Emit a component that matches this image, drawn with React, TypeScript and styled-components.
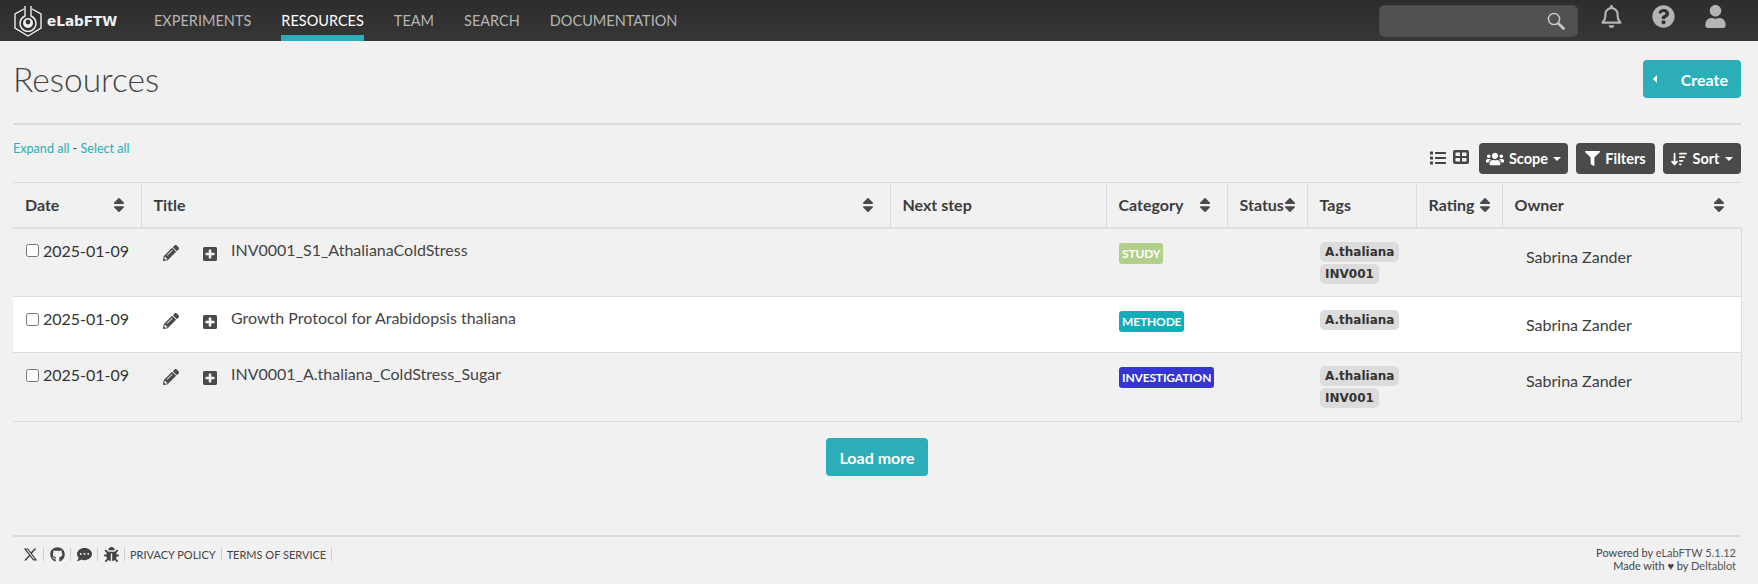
import styled, { createGlobalStyle } from "styled-components";
import { FaBug, FaCommentDots, FaFilter, FaGithub, FaList, FaPencilAlt, FaPlusSquare, FaQuestionCircle, FaSort, FaUser, FaUsers } from "react-icons/fa";
import { FaArrowDownWideShort, FaRegBell, FaXTwitter } from "react-icons/fa6";

const GlobalStyle = createGlobalStyle`
  html, body {
    margin: 0;
    padding: 0;
    background: #f1f1f1;
    color: #444;
    font-family: Lato, "Open Sans", sans-serif;
    font-size: 16px;
  }
`;

const NavBar = styled.nav`
  height: 41px;
  display: flex;
  align-items: stretch;
  padding: 0 31px 0 13px;
  background: linear-gradient(#2d2d2d, #363636);
`;
const Brand = styled.div`
  display: flex;
  align-items: center;
  gap: 4px;
  width: 126px;
  flex: none;
  color: #f0f0f0;
  font-family: "DejaVu Sans", sans-serif;
  font-weight: 700;
  font-size: 13.6px;
`;
const NavLinks = styled.div`
  display: flex;
`;
const NavLink = styled.a<{ $active?: boolean }>`
  display: flex;
  align-items: center;
  margin: 0 15px;
  font-size: 14.5px;
  color: ${(p) => (p.$active ? "#fff" : "#b5b5b5")};
  box-shadow: ${(p) => (p.$active ? "inset 0 -6px #2baeb9" : "none")};
`;
const NavRight = styled.div`
  margin-left: auto;
  display: flex;
  align-items: center;
  color: #b4b4b4;
`;
const SearchBox = styled.div`
  width: 199px;
  height: 32px;
  box-sizing: border-box;
  margin-right: 22px;
  padding-right: 12px;
  display: flex;
  align-items: center;
  justify-content: flex-end;
  background: #515151;
  border: 1px solid #494949;
  border-radius: 5px;
`;
const NavIcons = styled.div`
  display: flex;
  align-items: center;
  gap: 29px;
  font-size: 23px;
  padding-bottom: 9px;
  svg {
    display: block;
  }
`;

const Main = styled.main`
  padding: 0 17px 0 13px;
`;
const PageHead = styled.div`
  height: 84px;
  box-sizing: border-box;
  border-bottom: 2px solid #dcdcdc;
  display: flex;
  align-items: center;
  justify-content: space-between;
  padding-bottom: 6px;
`;
const Title = styled.h1`
  margin: 0;
  font-size: 33.5px;
  font-weight: 300;
  color: #444;
`;
const CreateButton = styled.button`
  width: 98px;
  height: 38px;
  border: 0;
  border-radius: 4px;
  background: #2baeb9;
  color: #fff;
  font: 700 16px Lato, sans-serif;
  display: flex;
  align-items: center;
  justify-content: space-between;
  padding: 0 13px 0 10px;
  &::before {
    content: "";
    border-right: 4px solid #fff;
    border-top: 4px solid transparent;
    border-bottom: 4px solid transparent;
  }
`;
const Toolbar = styled.div`
  height: 57px;
  display: flex;
  justify-content: space-between;
`;
const BulkLinks = styled.div`
  padding-top: 15px;
  font-size: 12.6px;
  line-height: 18px;
  a {
    color: #2baeb9;
  }
`;
const ToolActions = styled.div`
  display: flex;
  align-items: flex-start;
  padding-top: 18px;
`;
const ViewIcons = styled.div`
  display: flex;
  gap: 7px;
  margin: 7px 2px 0 0;
  font-size: 16px;
  color: #444;
`;
const ToolButton = styled.button<{ $width: number; $iconSize: number }>`
  width: ${(p) => p.$width}px;
  height: 31px;
  box-sizing: border-box;
  margin-left: 8px;
  padding: 0;
  display: flex;
  align-items: center;
  justify-content: center;
  gap: 5px;
  border: 0;
  border-radius: 4px;
  background: #4a4a4a;
  color: #fff;
  font: 700 14.5px Lato, sans-serif;
  svg {
    font-size: ${(p) => p.$iconSize}px;
  }
`;
const Caret = styled.span`
  border-top: 4px solid #fff;
  border-left: 4px solid transparent;
  border-right: 4px solid transparent;
`;

const Table = styled.table`
  width: 1728px;
  table-layout: fixed;
  border-collapse: collapse;
  border-top: 1px solid #dcdcdc;
  border-bottom: 1px solid #dcdcdc;
`;
const HeadCell = styled.th`
  height: 45px;
  padding: 0 13px 0 12px;
  box-sizing: border-box;
  text-align: left;
  font-size: 16px;
  font-weight: 700;
  color: #3c3c3c;
  border-bottom: 2px solid #dee2e6;
  & + & {
    border-left: 1px solid #dcdcdc;
  }
`;
const HeadInner = styled.div<{ $tight?: boolean }>`
  display: flex;
  align-items: center;
  justify-content: space-between;
  margin-right: ${(p) => (p.$tight ? "-5px" : "0")};
  svg {
    color: #4a4a4a;
    font-size: 18px;
    flex: none;
    margin-left: -4px;
  }
`;
const Row = styled.tr<{ $white?: boolean; $height: number }>`
  height: ${(p) => p.$height}px;
  background: ${(p) => (p.$white ? "#fff" : "transparent")};
  border-top: 1px solid #dcdcdc;
  &:first-child {
    border-top: 0;
  }
`;
const Cell = styled.td`
  vertical-align: top;
  padding: 13px 13px 0;
  box-sizing: border-box;
  font-size: 16px;
  line-height: 20px;
  color: #3c3c3c;
`;
const OwnerCell = styled(Cell)`
  padding: 18px 0 0 24px;
  border-right: 1px solid #dcdcdc;
`;
const DateWrap = styled.label`
  display: flex;
  align-items: center;
  gap: 4px;
  margin-top: -1px;
  white-space: nowrap;
  color: #333;
  font-size: 16px;
  input {
    margin: 0;
    width: 13px;
    height: 13px;
  }
`;
const TitleWrap = styled.div`
  display: flex;
  align-items: flex-start;
  margin: -2px 0 0 9px;
  font-size: 16px;
  color: #444;
`;
const EditIcon = styled.span`
  font-size: 16px;
  color: #4a4a4a;
  margin: 5px 23px 0 0;
  line-height: 0;
`;
const ExpandIcon = styled.span`
  font-size: 16px;
  color: #4a4a4a;
  margin: 6px 13px 0 0;
  line-height: 0;
`;
const CategoryBadge = styled.span<{ $color: string }>`
  display: block;
  width: fit-content;
  height: 21px;
  margin-top: 1px;
  padding: 0 3px;
  border-radius: 3px;
  background: ${(p) => p.$color};
  color: #fff;
  font-size: 12px;
  font-weight: 700;
  letter-spacing: -0.15px;
  line-height: 21px;
  text-transform: uppercase;
`;
const TagList = styled.div`
  display: flex;
  flex-direction: column;
  align-items: flex-start;
  gap: 2px;
`;
const Tag = styled.span`
  height: 20px;
  padding: 0 5px;
  border-radius: 5px;
  background: #dcdcdc;
  color: #333;
  font-family: "DejaVu Sans", sans-serif;
  font-size: 12px;
  font-weight: 700;
  line-height: 20px;
`;
const LoadRow = styled.div`
  display: flex;
  justify-content: center;
  margin-top: 16px;
`;
const LoadMore = styled.button`
  width: 102px;
  height: 38px;
  border: 0;
  border-radius: 4px;
  background: #2baeb9;
  color: #fff;
  font: 700 16px Lato, sans-serif;
`;
const Footer = styled.footer`
  margin-top: 59px;
  border-top: 2px solid #dcdcdc;
  padding-top: 9px;
  display: flex;
  justify-content: space-between;
  font-size: 11px;
  color: #444;
`;
const FooterLinks = styled.div`
  display: flex;
  align-items: center;
  height: 16px;
  padding-left: 4px;
`;
const FooterLink = styled.a<{ $icon?: boolean }>`
  display: flex;
  align-items: center;
  height: 13px;
  padding: 0 ${(p) => (p.$icon ? "5.5px" : "5px")};
  border-right: 1px solid #ccc;
  font-size: 15px;
  svg {
    display: block;
  }
`;
const FooterText = styled.span`
  font-size: 11px;
`;
const Powered = styled.div`
  padding-right: 5px;
  text-align: right;
  line-height: 13px;
  a {
    color: #555;
  }
`;

const Logo = () => (
  <svg width="30" height="32" viewBox="0 0 30 32" fill="none" stroke="#eee" strokeWidth="1.4">
    <path d="M11 4 L2 9 V23 L15 31 L28 23 V9 L19 4" />
    <path d="M12 1 V11 A8 8 0 1 0 18 11 V1" />
    <circle cx="15" cy="18" r="5" fill="#eee" stroke="none" />
    <circle cx="15" cy="17" r="2.4" fill="#333" stroke="none" />
  </svg>
);

const SearchIcon = () => (
  <svg width="18" height="18" viewBox="0 0 18 18" fill="none" stroke="#c8c8c8">
    <circle cx="7" cy="7" r="5.6" strokeWidth="1.5" />
    <path d="M11.5 11.5 L16.5 16.5" strokeWidth="2.8" strokeLinecap="round" />
  </svg>
);

const TableIcon = () => (
  <svg width="16" height="14" viewBox="0 0 16 14">
    <rect width="16" height="14" rx="2" fill="#444" />
    <rect x="2.5" y="2.5" width="4.5" height="3.5" fill="#f1f1f1" />
    <rect x="9" y="2.5" width="4.5" height="3.5" fill="#f1f1f1" />
    <rect x="2.5" y="8" width="4.5" height="3.5" fill="#f1f1f1" />
    <rect x="9" y="8" width="4.5" height="3.5" fill="#f1f1f1" />
  </svg>
);

const rows = [
  { title: "INV0001_S1_AthalianaColdStress", category: "Study", color: "#b2cf8c", tags: ["A.thaliana", "INV001"], height: 69 },
  { title: "Growth Protocol for Arabidopsis thaliana", category: "Methode", color: "#15acb9", tags: ["A.thaliana"], height: 56, white: true },
  { title: "INV0001_A.thaliana_ColdStress_Sugar", category: "Investigation", color: "#3535cf", tags: ["A.thaliana", "INV001"], height: 69 },
];

const widths = [128, 749, 216, 121, 80, 109, 86, 239];

export default function App() {
  return (
    <>
      <GlobalStyle />
      <NavBar>
        <Brand>
          <Logo />
          eLabFTW
        </Brand>
        <NavLinks>
          <NavLink>EXPERIMENTS</NavLink>
          <NavLink $active>RESOURCES</NavLink>
          <NavLink>TEAM</NavLink>
          <NavLink>SEARCH</NavLink>
          <NavLink>DOCUMENTATION</NavLink>
        </NavLinks>
        <NavRight>
          <SearchBox>
            <SearchIcon />
          </SearchBox>
          <NavIcons>
            <FaRegBell />
            <FaQuestionCircle />
            <FaUser />
          </NavIcons>
        </NavRight>
      </NavBar>
      <Main>
        <PageHead>
          <Title>Resources</Title>
          <CreateButton>Create</CreateButton>
        </PageHead>
        <Toolbar>
          <BulkLinks>
            <a>Expand all</a> - <a>Select all</a>
          </BulkLinks>
          <ToolActions>
            <ViewIcons>
              <FaList />
              <TableIcon />
            </ViewIcons>
            <ToolButton $width={89} $iconSize={18}>
              <FaUsers />
              Scope
              <Caret />
            </ToolButton>
            <ToolButton $width={79} $iconSize={15}>
              <FaFilter />
              Filters
            </ToolButton>
            <ToolButton $width={78} $iconSize={16}>
              <FaArrowDownWideShort />
              Sort
              <Caret />
            </ToolButton>
          </ToolActions>
        </Toolbar>
        <Table>
          <colgroup>
            {widths.map((w, i) => (
              <col key={i} width={w} />
            ))}
          </colgroup>
          <thead>
            <tr>
              <HeadCell><HeadInner>Date<FaSort /></HeadInner></HeadCell>
              <HeadCell><HeadInner>Title<FaSort /></HeadInner></HeadCell>
              <HeadCell>Next step</HeadCell>
              <HeadCell><HeadInner>Category<FaSort /></HeadInner></HeadCell>
              <HeadCell><HeadInner $tight>Status<FaSort /></HeadInner></HeadCell>
              <HeadCell>Tags</HeadCell>
              <HeadCell><HeadInner $tight>Rating<FaSort /></HeadInner></HeadCell>
              <HeadCell><HeadInner>Owner<FaSort /></HeadInner></HeadCell>
            </tr>
          </thead>
          <tbody>
            {rows.map((row) => (
              <Row key={row.title} $white={row.white} $height={row.height}>
                <Cell>
                  <DateWrap>
                    <input type="checkbox" />
                    2025-01-09
                  </DateWrap>
                </Cell>
                <Cell>
                  <TitleWrap>
                    <EditIcon><FaPencilAlt /></EditIcon>
                    <ExpandIcon><FaPlusSquare /></ExpandIcon>
                    {row.title}
                  </TitleWrap>
                </Cell>
                <Cell />
                <Cell>
                  <CategoryBadge $color={row.color}>{row.category}</CategoryBadge>
                </Cell>
                <Cell />
                <Cell>
                  <TagList>
                    {row.tags.map((tag) => (
                      <Tag key={tag}>{tag}</Tag>
                    ))}
                  </TagList>
                </Cell>
                <Cell />
                <OwnerCell>Sabrina Zander</OwnerCell>
              </Row>
            ))}
          </tbody>
        </Table>
        <LoadRow>
          <LoadMore>Load more</LoadMore>
        </LoadRow>
        <Footer>
          <FooterLinks>
            <FooterLink $icon><FaXTwitter /></FooterLink>
            <FooterLink $icon><FaGithub /></FooterLink>
            <FooterLink $icon><FaCommentDots /></FooterLink>
            <FooterLink $icon><FaBug /></FooterLink>
            <FooterLink><FooterText>PRIVACY POLICY</FooterText></FooterLink>
            <FooterLink><FooterText>TERMS OF SERVICE</FooterText></FooterLink>
          </FooterLinks>
          <Powered>
            Powered by <a>eLabFTW 5.1.12</a>
            <br />
            Made with ♥ by <a>Deltablot</a>
          </Powered>
        </Footer>
      </Main>
    </>
  );
}
